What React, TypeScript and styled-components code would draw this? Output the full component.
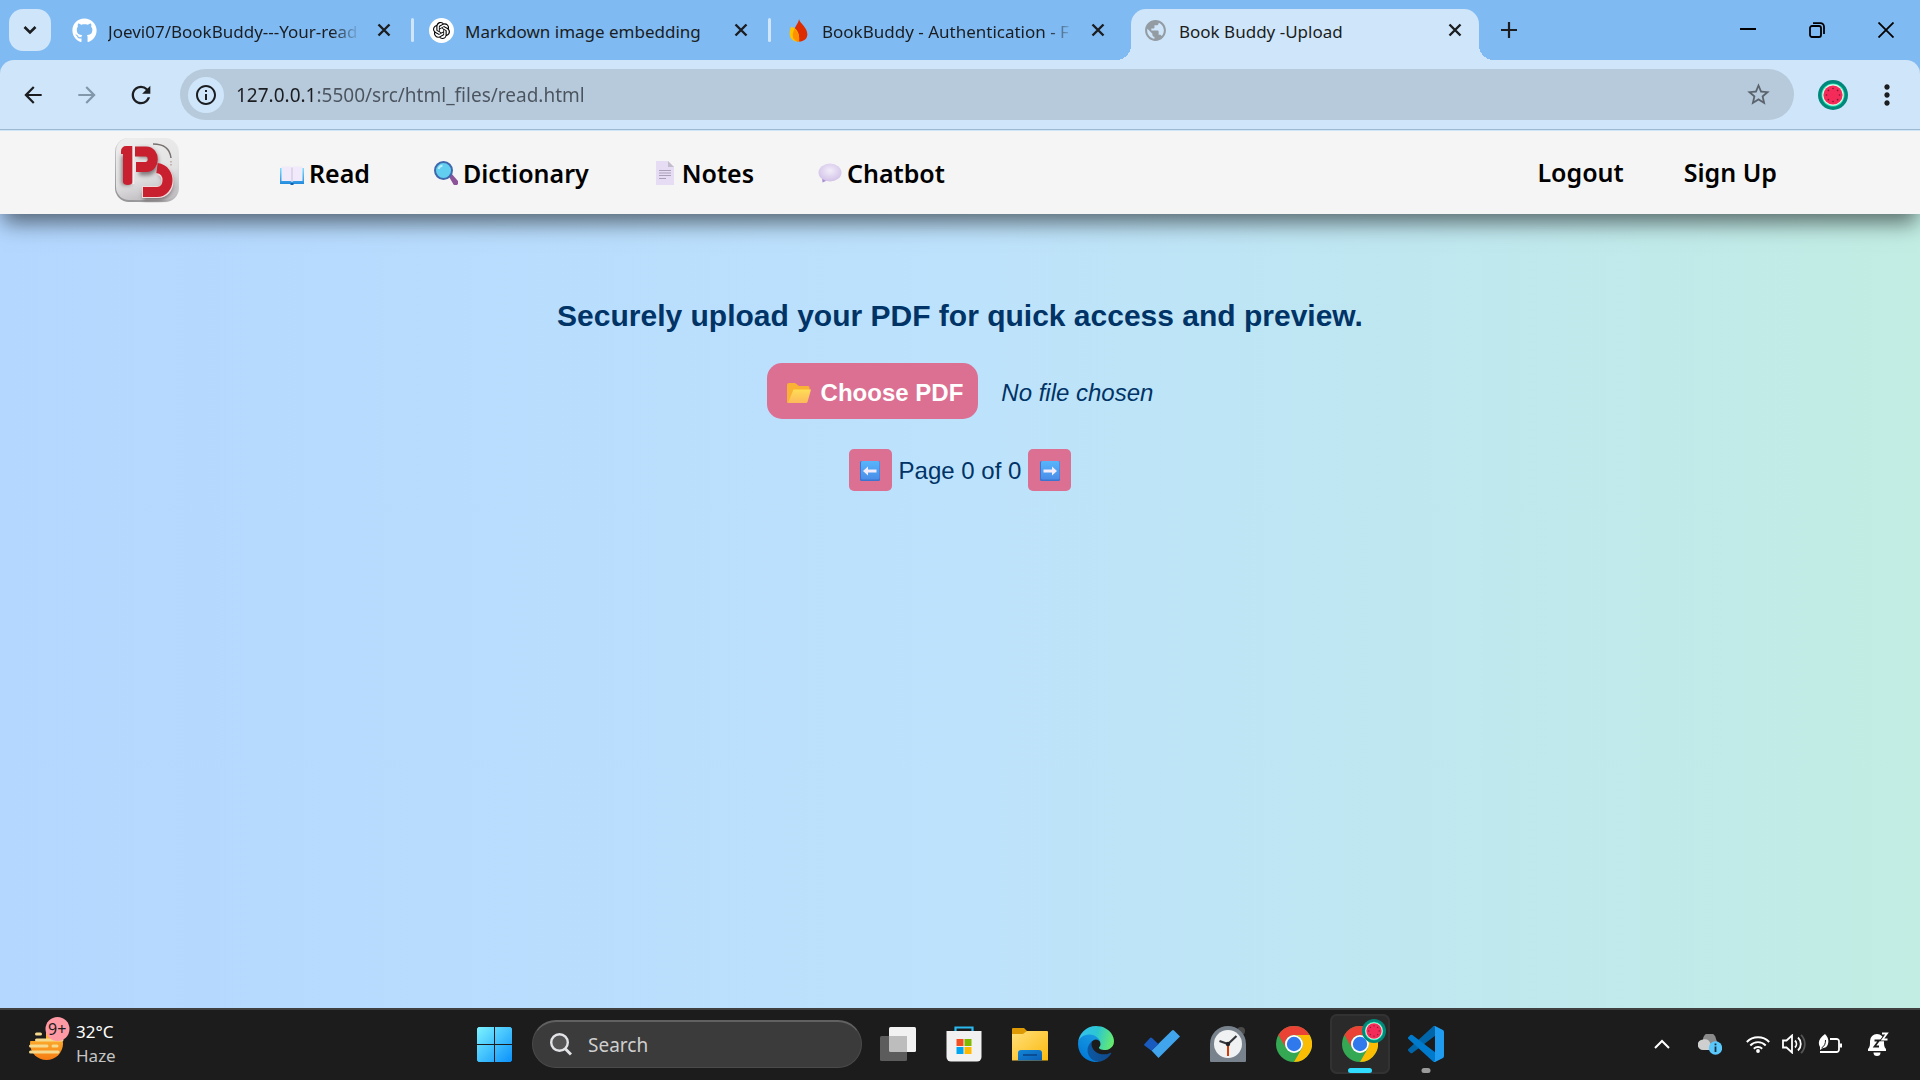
import React from "react";
import styled, { createGlobalStyle, css } from "styled-components";
import { FaGithub } from "react-icons/fa";
import { SiOpenai } from "react-icons/si";
import { MdPublic, MdStarBorder, MdInfoOutline, MdArrowBack, MdArrowForward, MdRefresh, MdMoreVert } from "react-icons/md";

const ui = `"Noto Sans", "Open Sans", sans-serif`;

const GlobalStyle = createGlobalStyle`
  *, *::before, *::after { box-sizing: border-box; }
  body { margin: 0; font-family: ${ui}; }
  button, input { font: inherit; color: inherit; border: 0; padding: 0; margin: 0; background: none; }
  button { cursor: pointer; display: inline-flex; align-items: center; justify-content: center; }
  a { color: inherit; text-decoration: none; }
  svg { display: block; flex: none; }
`;

const Screen = styled.div`
  min-height: 100vh;
  display: flex;
  flex-direction: column;
  overflow: hidden;
`;

/* ---------- Browser window ---------- */

const TabStrip = styled.div`
  height: 60px;
  background: #7fbaf2;
  display: flex;
  padding: 9px 0 0 9px;
  color: #1b1d21;
`;

const TabSearch = styled.button`
  width: 42px;
  height: 42px;
  margin-right: 9px;
  border-radius: 14px;
  background: #cfe6fa;
`;

const Tab = styled.div<{ $active?: boolean }>`
  position: relative;
  flex: 0 1 ${(p) => (p.$active ? 348 : 357)}px;
  min-width: 0;
  height: 51px;
  padding: 0 12px 9px;
  display: flex;
  align-items: center;
  ${(p) =>
    p.$active
      ? css`
          background: #cfe6fa;
          border-radius: 15px 15px 0 0;
          &::before,
          &::after {
            content: "";
            position: absolute;
            bottom: 0;
            width: 15px;
            height: 15px;
          }
          &::before {
            right: 100%;
            background: radial-gradient(circle at 0 0, transparent 15px, #cfe6fa 15px);
          }
          &::after {
            left: 100%;
            background: radial-gradient(circle at 100% 0, transparent 15px, #cfe6fa 15px);
          }
        `
      : css`
          padding-right: 0;
        `}
`;

const TabTitle = styled.span<{ $fade?: boolean }>`
  flex: 1;
  min-width: 0;
  margin: 3px 12px 0 11px;
  font-size: 17px;
  line-height: 24px;
  white-space: nowrap;
  overflow: hidden;
  ${(p) => p.$fade && css`mask-image: linear-gradient(to right, #000 calc(100% - 28px), transparent);`}
`;

const TabClose = styled.button`
  width: 24px;
  height: 24px;
`;

const TabDivider = styled.span<{ $hidden: boolean }>`
  width: 3px;
  height: 24px;
  margin-left: 15px;
  margin-right: 3px;
  border-radius: 2px;
  background: ${(p) => (p.$hidden ? "transparent" : "#cfe6fa")};
`;

const NewTab = styled.button`
  width: 42px;
  height: 42px;
  margin-left: 9px;
`;

const WindowButtons = styled.div`
  margin-left: auto;
  display: flex;
  height: 42px;
`;

const WindowButton = styled.button`
  width: 69px;
  height: 42px;
`;

const ToolbarBack = styled.div`
  position: relative;
  z-index: 2;
  background: #7fbaf2;
`;

const Toolbar = styled.div`
  height: 71px;
  padding: 9px 6px 11px;
  display: flex;
  align-items: flex-start;
  background: #cfe6fa;
  border-radius: 14px 14px 0 0;
  color: #1b1d21;
  box-shadow: inset 0 -1px #cfe6fa, inset 0 -2px #9db8d1;
`;

const ToolButton = styled.button<{ $dim?: boolean }>`
  width: 54px;
  height: 51px;
  color: ${(p) => (p.$dim ? "#8297a9" : "inherit")};
`;

const Omnibox = styled.div`
  flex: 1;
  height: 51px;
  margin-left: 12px;
  margin-right: 12px;
  padding: 0 22px 0 8px;
  display: flex;
  align-items: center;
  border-radius: 26px;
  background: #b7cadb;
`;

const SiteInfo = styled.button`
  width: 36px;
  height: 36px;
  border-radius: 50%;
  background: #cfe6fa;
`;

const Address = styled.input`
  flex: 1;
  min-width: 0;
  height: 36px;
  margin-left: 12px;
  font-size: 19px;
  outline: 0;
  background: linear-gradient(to right, #1b1d21 79px, #4b545e 79px);
  background-clip: text;
  -webkit-text-fill-color: transparent;
`;

/* ---------- Page ---------- */

const Header = styled.header`
  position: relative;
  z-index: 1;
  height: 83px;
  padding: 0 143px 0 114px;
  display: flex;
  align-items: center;
  background: #f5f5f5;
  box-shadow: 0 12px 20px -3px rgba(0, 0, 0, 0.53);
  color: #000;
  font-size: 25px;
  font-weight: 600;
  line-height: 36px;
`;

const Logo = styled.a`
  margin-right: 100px;
  padding-bottom: 6px;
`;

const Links = styled.nav<{ $gap: number }>`
  display: flex;
  gap: ${(p) => p.$gap}px;
`;

const NavLink = styled.a`
  display: flex;
  align-items: center;
  gap: 5px;
  white-space: nowrap;
`;

const Account = styled(Links)`
  margin-left: auto;
  padding-bottom: 2px;
`;

const Main = styled.main`
  flex: 1;
  padding-top: 81px;
  display: flex;
  flex-direction: column;
  align-items: center;
  background: linear-gradient(to right, #b3d7ff, #bde2fc 50%, #c1ede3);
  color: #003366;
  font-family: "Liberation Sans", Arial, sans-serif;
  font-size: 24px;
`;

const Title = styled.h1`
  margin: 0 0 26px;
  font-size: 30px;
  line-height: 42px;
  font-weight: 700;
`;

const UploadRow = styled.div`
  display: flex;
  align-items: center;
  gap: 23px;
  margin-bottom: 30px;
`;

const ChooseFile = styled.label`
  height: 56px;
  padding: 3px 15px 0 18px;
  display: flex;
  align-items: center;
  gap: 8px;
  border-radius: 15px;
  background: #db7093;
  color: #fff;
  font-weight: 700;
  cursor: pointer;
`;

const HiddenFile = styled.input`
  position: absolute;
  width: 1px;
  height: 1px;
  opacity: 0;
  overflow: hidden;
`;

const FileName = styled.span`
  padding-top: 3px;
  font-style: italic;
`;

const Pager = styled.div`
  display: flex;
  align-items: center;
  gap: 7px;
`;

const PageLabel = styled.span`
  padding-top: 2px;
`;

const PageButton = styled.button`
  width: 43px;
  height: 42px;
  padding-top: 2px;
  border-radius: 5px;
  background: #db7093;
`;

/* ---------- Taskbar ---------- */

const Taskbar = styled.footer`
  height: 72px;
  padding-bottom: 2px;
  display: grid;
  grid-template-columns: 1fr auto 1fr;
  align-items: center;
  background: #1c1c1c;
  border-top: 2px solid #404040;
  color: #fff;
`;

const Weather = styled.button`
  justify-self: start;
  margin-left: 28px;
  gap: 6px;
  text-align: left;
  font-size: 17px;
  line-height: 24px;
`;

const WeatherText = styled.span`
  display: flex;
  flex-direction: column;
`;

const Muted = styled.span`
  color: #c4c4c4;
`;

const Apps = styled.div`
  display: flex;
  align-items: center;
  gap: 6px;
`;

const AppButton = styled.button<{ $active?: boolean }>`
  position: relative;
  width: 60px;
  height: 60px;
  border-radius: 7px;
  ${(p) => p.$active && css`background: #2a2a2a; box-shadow: inset 0 0 0 2px #323232;`}
`;

const Running = styled.span<{ $active?: boolean }>`
  position: absolute;
  left: 50%;
  bottom: 1px;
  width: ${(p) => (p.$active ? 24 : 9)}px;
  height: 5px;
  transform: translateX(-50%);
  border-radius: 3px;
  background: ${(p) => (p.$active ? "#30dcff" : "#9a9a9a")};
`;

const SearchBox = styled.label`
  width: 330px;
  height: 48px;
  margin-left: 2px;
  padding: 0 17px;
  display: flex;
  align-items: center;
  gap: 16px;
  border-radius: 24px;
  border: 1px solid #4a4a4a;
  border-top: 2px solid #616161;
  background: #3b3b3b;
`;

const SearchInput = styled.input`
  flex: 1;
  min-width: 0;
  font-size: 19px;
  outline: 0;
  &::placeholder {
    color: #cfcfcf;
    opacity: 1;
  }
`;

const Tray = styled.div`
  justify-self: end;
  display: flex;
  align-items: center;
  padding-right: 18px;
`;

const TrayButton = styled.button<{ $w: number }>`
  width: ${(p) => p.$w}px;
  height: 48px;
`;

/* ---------- Drawings ---------- */

const Cross = () => (
  <svg width="14" height="14" viewBox="0 0 14 14" stroke="#1b1d21" strokeWidth="2.4">
    <path d="M1.5 1.5l11 11M12.5 1.5l-11 11" />
  </svg>
);

const Chevron = () => (
  <svg width="14" height="10" viewBox="0 0 14 10" fill="none" stroke="#1b1d21" strokeWidth="2.6">
    <path d="M1.5 2L7 7.5 12.500 2" />
  </svg>
);

const GithubMark = () => <FaGithub size={25} color="#fff" />;

const Disc = styled.span`
  width: 25px;
  height: 25px;
  display: flex;
  align-items: center;
  justify-content: center;
  border-radius: 50%;
  background: #fff;
  color: #000;
`;

const Flame = () => (
  <svg width="25" height="25" viewBox="0 0 24 24">
    <path d="M12.500 1C13 5 20.500 9 20.500 15.500c0 4-3 7-8 7-4 0-6-2-6-6C6.500 10 12 6 12.500 1z" fill="#dd2c00" />
    <path d="M5 8.500c4 1 8.500 4.500 7.500 14C7 23 3.500 19.500 3.500 15c0-2.500.5-4.500 1.500-6.500z" fill="#ffc400" />
    <path d="M8.200 10.500c3 2.400 4.900 6 4.300 12-4-.3-6-2.500-6-6 0-2.200.7-4.200 1.700-6z" fill="#ff9100" />
  </svg>
);

const Watermelon = ({ size = 30 }: { size?: number }) => (
  <svg width={size} height={size} viewBox="0 0 30 30">
    <circle cx="15" cy="15" r="15" fill="#00897b" />
    <circle cx="15" cy="15" r="11.500" fill="#1de9b6" />
    <circle cx="15" cy="15" r="10.700" fill="#e8f5e9" />
    <circle cx="15" cy="15" r="9.600" fill="#f42b58" />
    <g fill="#7a1836">
      {[0, 45, 90, 135, 180, 225, 270, 315].map((a) => (
        <circle key={a} cx="15" cy="8.500" r=".8" transform={`rotate(${a} 15 15)`} />
      ))}
    </g>
  </svg>
);

const BrandMark = () => (
  <svg width="66" height="66" viewBox="0 0 66 66" fill="none">
    <defs>
      <linearGradient id="tile" x1="0" y1="0" x2=".3" y2="1">
        <stop offset="0" stopColor="#efeeee" />
        <stop offset=".7" stopColor="#e3e2e3" />
        <stop offset="1" stopColor="#c4c2c5" />
      </linearGradient>
      <linearGradient id="rim" x1="1" y1="0" x2=".3" y2="1">
        <stop offset="0" stopColor="#f3f3f3" />
        <stop offset=".4" stopColor="#d6d5d7" />
        <stop offset="1" stopColor="#98979a" />
      </linearGradient>
      <filter id="soft" x="-20%" y="-20%" width="140%" height="140%">
        <feGaussianBlur stdDeviation="2" />
      </filter>
    </defs>
    <rect x="1" y="1" width="64" height="64" rx="14" fill="url(#rim)" />
    <rect x="2" y="1" width="62" height="62" rx="13" fill="url(#tile)" />
    <path d="M39 7c11 0 17 5 18 14" stroke="#77716f" strokeWidth="1.500" />
    <path d="M57 24v5" stroke="#b9a5a0" strokeWidth="1.500" strokeDasharray="1.500 1.500" />
    <g stroke="#55484b" strokeOpacity=".7" strokeWidth="9" filter="url(#soft)">
      <path d="M12 18v30M24 16h9c9 0 9 18 0 18h-8M46 34c12 4 10 25-2 25H29" />
    </g>
    <path d="M7 14a5 5 0 0 1 5-5h6.500v36c0 4-9.500 4-9.500 0V17H7z" fill="#c8202f" />
    <path d="M21 14.500h11c9 0 9 15.500 0 15.500h-10" stroke="#c8202f" strokeWidth="10" />
    <path d="M45 32c12 4 11 23-1 23H28" stroke="#efd9da" strokeWidth="12" />
    <path d="M43 31c15 2 13 24 0 24H29" stroke="#c8202f" strokeWidth="10" />
    <path d="M19.500 9v38" stroke="#f3eeee" strokeWidth="1.800" />
  </svg>
);

const BookIcon = () => (
  <svg width="24" height="24" viewBox="0 0 24 24">
    <defs>
      <linearGradient id="cover" x1="0" y1="0" x2="0" y2="1">
        <stop offset="0" stopColor="#7ce0fb" />
        <stop offset="1" stopColor="#1f86dc" />
      </linearGradient>
    </defs>
    <path d="M0 7h24v16H13.500l-1.500 1-1.500-1H0z" fill="url(#cover)" />
    <path d="M1.500 5.500h9l1.500 1 1.500-1h9V20h-9L12 21l-1.500-1h-9z" fill="#f0eafa" />
    <path d="M12 6.500V21" stroke="#cbbfe0" />
    <path d="M10.500 22h3v2h-3z" fill="#1262b3" />
  </svg>
);

const LensIcon = () => (
  <svg width="24" height="24" viewBox="0 0 24 24">
    <path d="M14 14l3-2 6.500 7.500a2.500 2.500 0 0 1-4 4z" fill="#8c5398" />
    <circle cx="9.500" cy="9.500" r="8.500" fill="#62cff0" stroke="#3f68ad" strokeWidth="2" />
    <path d="M4.500 8a5 5 0 0 1 4-3.500" stroke="#b8effc" strokeWidth="1.800" fill="none" />
  </svg>
);

const NoteIcon = () => (
  <svg width="24" height="24" viewBox="0 0 24 24">
    <path d="M3 0h12l6 6v18H3z" fill="#e6dcf3" />
    <path d="M15 0l6 6h-6z" fill="#c3bccd" />
    <path d="M6 9.500h12M6 12h12M6 14.500h12M6 17.500h7" stroke="#a9a0b8" strokeWidth="1.200" />
  </svg>
);

const BubbleIcon = () => (
  <svg width="24" height="24" viewBox="0 0 24 24">
    <defs>
      <radialGradient id="bubble" cx=".5" cy=".4" r=".6">
        <stop offset="0" stopColor="#f2edf9" />
        <stop offset="1" stopColor="#d2c2e8" />
      </radialGradient>
    </defs>
    <path d="M4 16l.5 5.500L10 19z" fill="#a98fd0" />
    <ellipse cx="12" cy="11.500" rx="11.500" ry="9" fill="url(#bubble)" />
  </svg>
);

const FolderEmoji = () => (
  <svg width="28" height="24" viewBox="0 0 28 24">
    <defs>
      <linearGradient id="flap" x1="0" y1="0" x2="0" y2="1">
        <stop offset="0" stopColor="#ffdd55" />
        <stop offset="1" stopColor="#fdb95b" />
      </linearGradient>
    </defs>
    <path d="M2 4a2 2 0 0 1 2-2h6l4 3h9a1.500 1.500 0 0 1 1.500 1.500V12L5 22H3a1 1 0 0 1-1-1z" fill="#f9b233" />
    <path d="M8.500 8.500H26l-3.500 12.500a1.500 1.500 0 0 1-1.500 1H3z" fill="url(#flap)" />
  </svg>
);

const ArrowEmoji = ({ right }: { right?: boolean }) => (
  <svg width="20" height="20" viewBox="0 0 20 20">
    <defs>
      <linearGradient id="key" x1="0" y1="0" x2="0" y2="1">
        <stop offset="0" stopColor="#58b5fb" />
        <stop offset="1" stopColor="#4a8ee8" />
      </linearGradient>
    </defs>
    <rect width="20" height="20" rx="1.500" fill="#3a75d2" />
    <rect x="1" width="18.500" height="18.500" rx="1.500" fill="url(#key)" />
    <path d="M3 10l5-4.500v3h8.500v3H8v3z" fill="#f3ecfb" transform={right ? "rotate(180 10 10)" : undefined} />
  </svg>
);

const HazeIcon = () => (
  <svg width="42" height="56" viewBox="0 0 42 56">
    <defs>
      <linearGradient id="sun" x1="0" y1="0" x2="0" y2="1">
        <stop offset="0" stopColor="#ffc83d" />
        <stop offset="1" stopColor="#f57c12" />
      </linearGradient>
    </defs>
    <circle cx="18.500" cy="27.500" r="16.500" fill="url(#sun)" />
    <path d="M0 8h18v17H0z" fill="#1c1c1c" />
    <g stroke="#f5d98c" strokeWidth="3" strokeLinecap="round">
      <path d="M8.500 18h4M8.500 24H34M2.500 30H19M25 30h4M2.500 36H30" />
    </g>
    <circle cx="29.500" cy="13" r="12" fill="#ff99a4" />
    <text x="20" y="19" fontSize="16" fill="#1c1c1c" fontFamily="Noto Sans, sans-serif">9+</text>
  </svg>
);

const StartIcon = () => (
  <svg width="36" height="36" viewBox="0 0 36 36">
    <defs>
      <linearGradient id="win" x1="0" y1="0" x2="1" y2="1">
        <stop offset="0" stopColor="#7df3ff" />
        <stop offset="1" stopColor="#0a91fb" />
      </linearGradient>
    </defs>
    <path d="M2.500 1H18v17H1V2.500zM19 1h15.500L36 2.500V18H19zM1 19h17v17H2.500L1 34.500zM19 19h17v15.500L34.500 36H19z" fill="url(#win)" />
  </svg>
);

const SearchIcon = () => (
  <svg width="22" height="23" viewBox="0 0 22 23" fill="none" stroke="#e2e4e8">
    <circle cx="9.500" cy="9.500" r="8.300" strokeWidth="2.400" fill="#555" />
    <path d="M15.500 16l5.500 5.500" strokeWidth="3" />
  </svg>
);

const TaskViewIcon = () => (
  <svg width="36" height="36" viewBox="0 0 36 36">
    <rect x="9" y="1" width="27" height="25" rx="1.500" fill="#f2f2f2" />
    <rect x="0" y="10" width="27" height="25" rx="1.500" fill="#5c5c5c" />
    <path d="M9 10h18v16H10.500A1.500 1.500 0 0 1 9 24.500z" fill="#bdbdbd" />
  </svg>
);

const StoreIcon = () => (
  <svg width="36" height="36" viewBox="0 0 36 36">
    <path d="M9.500 7V1.500h17V7" fill="none" stroke="#29b9ef" strokeWidth="2.200" />
    <path d="M.5 5h35v26a4.500 4.500 0 0 1-4.500 4.500H5A4.500 4.500 0 0 1 .5 31z" fill="#f1f1f1" />
    <path d="M10.500 13h7v7h-7z" fill="#f25022" />
    <path d="M18.500 13h7v7h-7z" fill="#7fba00" />
    <path d="M10.500 21h7v7h-7z" fill="#00a4ef" />
    <path d="M18.500 21h7v7h-7z" fill="#ffb900" />
  </svg>
);

const ExplorerIcon = () => (
  <svg width="36" height="36" viewBox="0 0 36 36">
    <defs>
      <linearGradient id="fold" x1="0" y1="0" x2="1" y2="1">
        <stop offset="0" stopColor="#ffe07a" />
        <stop offset="1" stopColor="#fbb90f" />
      </linearGradient>
      <linearGradient id="dock" x1="0" y1="0" x2="1" y2="1">
        <stop offset="0" stopColor="#1287d8" />
        <stop offset="1" stopColor="#0c5fb5" />
      </linearGradient>
    </defs>
    <path d="M0 3a1 1 0 0 1 1-1h11l3.500 3.500L12 9H0z" fill="#dd9a04" />
    <path d="M0 8h11l4-3h20a1 1 0 0 1 1 1v28.500H0z" fill="url(#fold)" />
    <path d="M6 34.500V27a3 3 0 0 1 3-3h18a3 3 0 0 1 3 3v7.500z" fill="url(#dock)" />
    <path d="M11 29h14" stroke="#0b4a8f" strokeWidth="1.800" />
  </svg>
);

const EdgeIcon = () => (
  <svg width="36" height="36" viewBox="0 0 256 256">
    <defs>
      <linearGradient id="e1" x1="0" y1="0" x2="1" y2="0">
        <stop offset="0" stopColor="#0c59a4" />
        <stop offset="1" stopColor="#114a8b" />
      </linearGradient>
      <linearGradient id="e2" x1=".8" y1="0" x2=".3" y2="1">
        <stop offset="0" stopColor="#1b9de2" />
        <stop offset="1" stopColor="#0078d7" />
      </linearGradient>
      <linearGradient id="e3" x1="0" y1=".3" x2="1" y2=".5">
        <stop offset="0" stopColor="#35c1f1" />
        <stop offset=".5" stopColor="#2bc6d2" />
        <stop offset="1" stopColor="#66eb6e" />
      </linearGradient>
    </defs>
    <path d="M231.100 190.500c-3.400 1.800-6.900 3.400-10.500 4.700a101.100 101.100 0 0 1-35.900 6.500c-47.300 0-88.500-32.500-88.500-74.300a31.500 31.500 0 0 1 16.400-27.300c-42.800 1.800-53.800 46.400-53.800 72.500 0 74 68.100 81.400 82.800 81.400 7.900 0 19.800-2.300 27-4.600l1.300-.4a128.300 128.300 0 0 0 66.600-52.800 4 4 0 0 0-5.400-5.700z" fill="url(#e1)" />
    <path d="M105.700 241.400a79.200 79.200 0 0 1-22.700-21.300 80.700 80.700 0 0 1 29.500-120c3.200-1.500 8.500-4.100 15.600-4a32.400 32.400 0 0 1 25.700 13 31.900 31.900 0 0 1 6.300 18.700c0-.2 24.500-79.600-80-79.600-43.900 0-80 41.600-80 78.200a130.200 130.200 0 0 0 12.100 56 128 128 0 0 0 156.400 67 75.500 75.500 0 0 1-62.800-8z" fill="url(#e2)" />
    <path d="M152.300 148.900c-.9 1-3.400 2.500-3.400 5.600 0 2.600 1.700 5.200 4.800 7.300 14.300 10 41.400 8.600 41.500 8.600a59.600 59.600 0 0 0 30.300-8.300 61.400 61.400 0 0 0 30.400-52.900c.3-22.400-8-37.300-11.300-43.900C223.500 23.900 177.700 0 128 0A128 128 0 0 0 0 126.200c.5-36.500 36.800-66 80-66 3.500 0 23.500.3 42 10.100 16.300 8.600 24.900 19 30.800 29.200 6.200 10.700 7.300 24.100 7.300 29.500 0 5.300-2.700 13.300-7.800 19.900z" fill="url(#e3)" />
  </svg>
);

const TodoIcon = () => (
  <svg width="36" height="36" viewBox="0 0 36 36">
    <path d="M14.500 32l-7-7.500L28 4.500a1.500 1.500 0 0 1 2 0l6 6z" fill="#41a5ee" />
    <path d="M.5 18l5.500-6a1.500 1.500 0 0 1 2 0l6.500 6.200-7 6.600-7-5.300a1 1 0 0 1 0-1.500z" fill="#185abd" />
  </svg>
);

const ClockIcon = () => (
  <svg width="36" height="36" viewBox="0 0 36 36">
    <circle cx="31" cy="5" r="4" fill="#4b4b4b" />
    <path d="M0 18a18 18 0 0 1 36 0v17a1 1 0 0 1-1 1H1a1 1 0 0 1-1-1z" fill="#78828d" />
    <circle cx="18" cy="18" r="14" fill="#f0f1f2" />
    <path d="M9.500 15l8.500 3 8.500-8" fill="none" stroke="#33373c" strokeWidth="2.200" />
    <path d="M18 20v10" stroke="#d83b01" strokeWidth="2" />
    <circle cx="18" cy="18" r="2.200" fill="#202225" />
  </svg>
);

const ChromeIcon = () => (
  <svg width="36" height="36" viewBox="0 0 36 36">
    <circle cx="18" cy="18" r="18" fill="#34a853" />
    <path d="M2.410 9A18 18 0 0 1 33.590 9H18a9 9 0 0 0-7.800 13.500z" fill="#ea4335" />
    <path d="M33.590 9A18 18 0 0 1 18 36l7.800-13.500A9 9 0 0 0 18 9z" fill="#fbbc04" />
    <circle cx="18" cy="18" r="9" fill="#fff" />
    <circle cx="18" cy="18" r="7.200" fill="#3079ed" />
  </svg>
);

const ProfileBadge = styled.span`
  position: absolute;
  top: 5px;
  right: 4px;
`;

const CodeIcon = () => (
  <svg width="36" height="36" viewBox="0 0 100 100">
    <path d="M96.460 10.800 75.860.87a6.230 6.230 0 0 0-7.110 1.210L1.300 63.580a4.170 4.170 0 0 0 0 6.170l5.510 5.010a4.170 4.170 0 0 0 5.320.24L93.360 13.370c2.720-2.070 6.640-.13 6.640 3.300v-.24a6.250 6.250 0 0 0-3.540-5.630z" fill="#0065a9" />
    <path d="M96.460 89.200 75.860 99.130a6.230 6.230 0 0 1-7.110-1.210L1.300 36.420a4.170 4.170 0 0 1 0-6.170l5.510-5.010a4.170 4.170 0 0 1 5.320-.24l81.230 61.630c2.720 2.070 6.640.13 6.640-3.300v.24a6.250 6.250 0 0 1-3.540 5.630z" fill="#007acc" />
    <path d="M75.860 99.130a6.230 6.230 0 0 1-7.110-1.210c2.310 2.300 6.250.67 6.250-2.590V4.670c0-3.260-3.940-4.890-6.250-2.590a6.230 6.230 0 0 1 7.110-1.210l20.600 9.910A6.250 6.250 0 0 1 100 16.410v67.180a6.250 6.250 0 0 1-3.540 5.630z" fill="#1f9cf0" />
  </svg>
);

const TrayChevron = () => (
  <svg width="16" height="10" viewBox="0 0 16 10" fill="none" stroke="#fff" strokeWidth="2">
    <path d="M1 9l7-7 7 7" />
  </svg>
);

const CloudIcon = () => (
  <svg width="24" height="21" viewBox="0 0 24 21">
    <path d="M5 6a6.500 6.500 0 0 1 13-1l2 5-8 4z" fill="#8a8a8a" />
    <path d="M5 16a5.200 5.200 0 0 1 0-10.500c3-1 6 0 7 3l3 7.500z" fill="#cfcfcf" />
    <circle cx="17.500" cy="14" r="6.700" fill="#5ac8fa" />
    <path d="M17.500 12.500V18M17.500 9.500v1.800" stroke="#13364a" strokeWidth="1.800" />
  </svg>
);

const WifiIcon = () => (
  <svg width="24" height="18" viewBox="0 0 24 18" fill="none" stroke="#fff" strokeWidth="1.900">
    <path d="M.8 7a15.500 15.500 0 0 1 22.400 0M4.300 10.500a10.500 10.500 0 0 1 15.400 0M7.800 13.700a6 6 0 0 1 8.400 0" />
    <circle cx="12" cy="16" r="1.900" fill="#fff" stroke="none" />
  </svg>
);

const SpeakerIcon = () => (
  <svg width="24" height="20" viewBox="0 0 24 20" fill="none" stroke="#fff" strokeWidth="1.800">
    <path d="M1 6.500h3.500L10 1.500v17l-5.500-5H1z" />
    <path d="M13 6.500a5 5 0 0 1 0 7M16 3.500a9 9 0 0 1 0 13" />
    <path d="M19 .8a13 13 0 0 1 0 18.400" stroke="#555" />
  </svg>
);

const BatteryIcon = () => (
  <svg width="24" height="20" viewBox="0 0 24 20" fill="none">
    <path d="M12 5h6.500A2.500 2.500 0 0 1 21 7.500v8a2.500 2.500 0 0 1-2.500 2.500H2" stroke="#fff" strokeWidth="1.800" />
    <path d="M21.500 9.500H24v4h-2.500z" fill="#fff" />
    <path d="M7 0c3 3 4 6 3 10-1 3-3 4-5 4l-3 2v-3C-.5 9 1 4 7 0z" fill="#fff" />
    <path d="M7.500 6c0 4-1 6-4 8" stroke="#1c1c1c" />
  </svg>
);

const BellIcon = () => (
  <svg width="22" height="24" viewBox="0 0 22 24">
    <path d="M1 17c2-2 2-4 2-8a7 7 0 0 1 14 0c0 4 0 6 2 8v2H1z" fill="#fff" />
    <path d="M6.500 20.500h7a3.500 3.500 0 0 1-7 0z" fill="#fff" />
    <path d="M7.500 8.500H12l-4.500 6H12" fill="none" stroke="#1c1c1c" strokeWidth="1.800" />
    <path d="M15 1.500h5l-4.500 6h5" fill="none" stroke="#1c1c1c" strokeWidth="3.500" />
    <path d="M15 1.500h5l-4.500 6h5" fill="none" stroke="#fff" strokeWidth="1.800" />
  </svg>
);

const tabs = [
  { title: "Joevi07/BookBuddy---Your-read", icon: <GithubMark />, fade: true },
  { title: "Markdown image embedding", icon: <Disc><SiOpenai size={17} /></Disc>, fade: false },
  { title: "BookBuddy - Authentication - F", icon: <Flame />, fade: true },
];

const links = [
  { label: "Read", icon: <BookIcon /> },
  { label: "Dictionary", icon: <LensIcon /> },
  { label: "Notes", icon: <NoteIcon /> },
  { label: "Chatbot", icon: <BubbleIcon /> },
];

const apps = [
  { name: "Task view", icon: <TaskViewIcon /> },
  { name: "Microsoft Store", icon: <StoreIcon /> },
  { name: "File Explorer", icon: <ExplorerIcon /> },
  { name: "Edge", icon: <EdgeIcon /> },
  { name: "To Do", icon: <TodoIcon /> },
  { name: "Clock", icon: <ClockIcon /> },
  { name: "Chrome", icon: <ChromeIcon /> },
];

export default function App() {
  return (
    <Screen>
      <GlobalStyle />
      <TabStrip>
        <TabSearch aria-label="Search tabs"><Chevron /></TabSearch>
        {tabs.map((t, i) => (
          <Tab key={t.title}>
            {t.icon}
            <TabTitle $fade={t.fade}>{t.title}</TabTitle>
            <TabClose aria-label="Close tab"><Cross /></TabClose>
            <TabDivider $hidden={i === tabs.length - 1} />
          </Tab>
        ))}
        <Tab $active>
          <MdPublic size={25} color="#939ba3" />
          <TabTitle>Book Buddy -Upload</TabTitle>
          <TabClose aria-label="Close tab"><Cross /></TabClose>
        </Tab>
        <NewTab aria-label="New tab">
          <svg width="16" height="16" viewBox="0 0 16 16" stroke="#1b1d21" strokeWidth="2.200"><path d="M8 0v16M0 8h16" /></svg>
        </NewTab>
        <WindowButtons>
          <WindowButton aria-label="Minimize">
            <svg width="16" height="16" viewBox="0 0 16 16" stroke="#000" strokeWidth="2"><path d="M0 7h16" /></svg>
          </WindowButton>
          <WindowButton aria-label="Restore">
            <svg width="16" height="16" viewBox="0 0 16 16" fill="none" stroke="#000" strokeWidth="1.800">
              <rect x="1" y="4" width="11" height="11" rx="2" />
              <path d="M4 1.200h7.500A3.500 3.500 0 0 1 15 4.700V12" />
            </svg>
          </WindowButton>
          <WindowButton aria-label="Close window">
            <svg width="16" height="16" viewBox="0 0 16 16" stroke="#000" strokeWidth="1.800"><path d="M.5.5l15 15M15.500.5l-15 15" /></svg>
          </WindowButton>
        </WindowButtons>
      </TabStrip>
      <ToolbarBack>
        <Toolbar>
          <ToolButton aria-label="Back"><MdArrowBack size={26} /></ToolButton>
          <ToolButton aria-label="Forward" $dim><MdArrowForward size={26} /></ToolButton>
          <ToolButton aria-label="Reload"><MdRefresh size={28} /></ToolButton>
          <Omnibox>
            <SiteInfo aria-label="Site information"><MdInfoOutline size={24} /></SiteInfo>
            <Address aria-label="Address" defaultValue="127.0.0.1:5500/src/html_files/read.html" />
            <MdStarBorder size={27} color="#5b646d" />
          </Omnibox>
          <ToolButton aria-label="Profile"><Watermelon /></ToolButton>
          <ToolButton aria-label="Menu"><MdMoreVert size={32} /></ToolButton>
        </Toolbar>
      </ToolbarBack>

      <Header>
        <Logo href="#" aria-label="Home"><BrandMark /></Logo>
        <Links $gap={64}>
          {links.map((l) => (
            <NavLink key={l.label} href="#">{l.icon}{l.label}</NavLink>
          ))}
        </Links>
        <Account $gap={60}>
          <NavLink href="#">Logout</NavLink>
          <NavLink href="#">Sign Up</NavLink>
        </Account>
      </Header>

      <Main>
        <Title>Securely upload your PDF for quick access and preview.</Title>
        <UploadRow>
          <ChooseFile htmlFor="pdf"><FolderEmoji />Choose PDF</ChooseFile>
          <HiddenFile id="pdf" type="file" accept="application/pdf" />
          <FileName>No file chosen</FileName>
        </UploadRow>
        <Pager>
          <PageButton aria-label="Previous page"><ArrowEmoji /></PageButton>
          <PageLabel>Page 0 of 0</PageLabel>
          <PageButton aria-label="Next page"><ArrowEmoji right /></PageButton>
        </Pager>
      </Main>

      <Taskbar>
        <Weather>
          <HazeIcon />
          <WeatherText>
            <span>32°C</span>
            <Muted>Haze</Muted>
          </WeatherText>
        </Weather>
        <Apps>
          <AppButton aria-label="Start"><StartIcon /></AppButton>
          <SearchBox>
            <SearchIcon />
            <SearchInput placeholder="Search" aria-label="Search" />
          </SearchBox>
          {apps.map((a) => (
            <AppButton key={a.name} aria-label={a.name}>{a.icon}</AppButton>
          ))}
          <AppButton aria-label="Chrome, Book Buddy" $active>
            <ChromeIcon />
            <ProfileBadge><Watermelon size={24} /></ProfileBadge>
            <Running $active />
          </AppButton>
          <AppButton aria-label="Visual Studio Code">
            <CodeIcon />
            <Running />
          </AppButton>
        </Apps>
        <Tray>
          <TrayButton $w={48} aria-label="Hidden icons"><TrayChevron /></TrayButton>
          <TrayButton $w={48} aria-label="OneDrive"><CloudIcon /></TrayButton>
          <TrayButton $w={48} aria-label="Network"><WifiIcon /></TrayButton>
          <TrayButton $w={24} aria-label="Volume"><SpeakerIcon /></TrayButton>
          <TrayButton $w={48} aria-label="Battery"><BatteryIcon /></TrayButton>
          <TrayButton $w={48} aria-label="Notifications"><BellIcon /></TrayButton>
        </Tray>
      </Taskbar>
    </Screen>
  );
}
